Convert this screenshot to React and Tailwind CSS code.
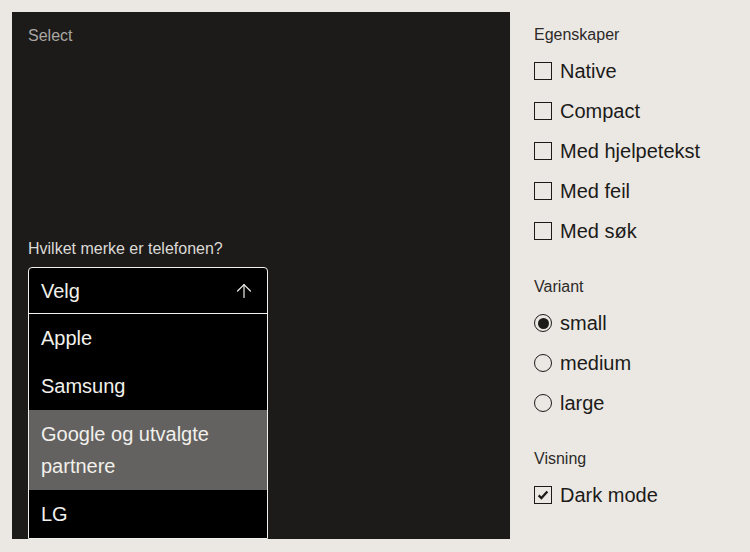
import React from 'react';
import { ArrowUp } from 'lucide-react';

const egenskaper = ['Native', 'Compact', 'Med hjelpetekst', 'Med feil', 'Med søk'];
const varianter = ['small', 'medium', 'large'];
const merker = ['Apple', 'Samsung', 'Google og utvalgte partnere', 'LG'];

function Checkbox({ label, checked }) {
  return (
    <label className="flex h-10 items-center gap-2 text-[20px] text-[#1c1b19]">
      <span className="flex h-[18px] w-[18px] items-center justify-center border-[1.5px] border-[#1c1b19]">
        {checked && (
          <svg viewBox="0 0 16 16" className="h-[14px] w-[14px]" fill="none" stroke="#1c1b19" strokeWidth="2.6">
            <path d="M3 8.5l3.2 3L13 4" />
          </svg>
        )}
      </span>
      {label}
    </label>
  );
}

function Radio({ label, checked }) {
  return (
    <label className="flex h-10 items-center gap-2 text-[20px] text-[#1c1b19]">
      <span className="flex h-[18px] w-[18px] items-center justify-center rounded-full border-[1.5px] border-[#1c1b19]">
        {checked && <span className="h-[11px] w-[11px] rounded-full bg-[#1c1b19]" />}
      </span>
      {label}
    </label>
  );
}

export default function App() {
  return (
    <div
      className="flex h-[552px] w-[750px] gap-6 bg-[#ebe8e4] pl-3 pt-3"
      style={{ fontFamily: '"Liberation Sans", Arial, sans-serif' }}
    >
      <div className="flex h-[527px] w-[498px] flex-col overflow-hidden bg-[#1c1b19] px-4 pt-3">
        <div className="text-[16px] leading-6 text-[#a9a7a3]">Select</div>

        <div className="mt-auto">
          <div className="mb-[6px] text-[16px] leading-6 text-[#dcdad6]">Hvilket merke er telefonen?</div>
          <div className="w-[240px] rounded-t-[4px] border border-[#f2f0ec] bg-black text-[20px] leading-8 text-[#f2f0ec]">
            <div className="flex h-[46px] items-center justify-between border-b border-[#f2f0ec] pl-3 pr-[12px]">
              <span>Velg</span>
              <ArrowUp size={22} strokeWidth={1.3} />
            </div>
            {merker.map((m) => (
              <div
                key={m}
                className={
                  m.startsWith('Google')
                    ? 'bg-[#636260] px-3 py-2'
                    : 'px-3 py-2'
                }
              >
                {m}
              </div>
            ))}
          </div>
        </div>
      </div>

      <div className="flex flex-col pt-[11px]">
        <div className="mb-1 text-[16px] leading-6 text-[#2b2a28]">Egenskaper</div>
        {egenskaper.map((e) => (
          <Checkbox key={e} label={e} />
        ))}

        <div className="mb-1 mt-6 text-[16px] leading-6 text-[#2b2a28]">Variant</div>
        {varianter.map((v) => (
          <Radio key={v} label={v} checked={v === 'small'} />
        ))}

        <div className="mb-1 mt-6 text-[16px] leading-6 text-[#2b2a28]">Visning</div>
        <Checkbox label="Dark mode" checked />
      </div>
    </div>
  );
}
